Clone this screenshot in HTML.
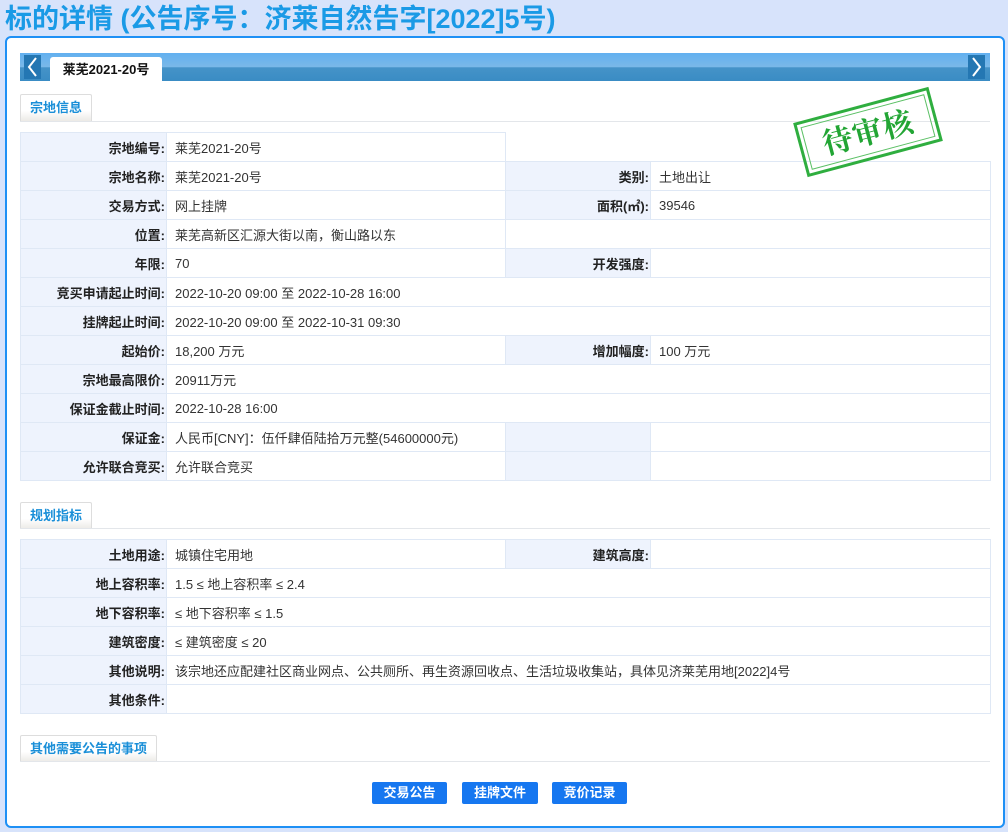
<!DOCTYPE html>
<html><head><meta charset="utf-8">
<style>
*{margin:0;padding:0;box-sizing:border-box}
body{width:1008px;height:832px;background:#d7e3fb;font-family:"Liberation Sans","Noto Sans CJK SC",sans-serif;position:relative;overflow:hidden;font-size:13px;color:#333}
.title{position:absolute;left:5px;top:2px;font-size:27px;font-weight:bold;color:#1a9ae6;line-height:34px;white-space:nowrap}
.panel{position:absolute;left:5px;top:36px;width:1000px;height:792px;background:#fff;border:2px solid #1e90f5;border-radius:6px}
.bar{position:absolute;left:20px;top:53px;width:970px;height:28px;background:linear-gradient(#62b0f0 0,#7ab8e8 50%,#4593c8 52%,#3a8cc4 100%)}
.arr{position:absolute;top:55px;width:17px;height:24px;background:#2477b3;color:#fff}
.tab{position:absolute;left:50px;top:57px;width:112px;height:24px;background:#fff;border-radius:3px 3px 0 0;font-weight:bold;font-size:13px;color:#111;text-align:center;line-height:26px}
.sec{position:absolute;left:20px;height:27px;border:1px solid #ddd;border-bottom:none;background:linear-gradient(#fff 60%,#eceae6);color:#1a8fd8;font-weight:bold;font-size:13px;line-height:26px;padding:0 9px;border-radius:2px 2px 0 0}
.secline{position:absolute;left:20px;width:970px;height:1px;background:#e3e6ea}
table{position:absolute;left:20px;width:970px;border-collapse:collapse;table-layout:fixed}
td{height:29px;border:1px solid #dfe8f5;padding:0 6px 0 8px;white-space:nowrap;font-size:13px;color:#333}
td.l{background:#eef3fd;text-align:right;font-weight:bold;color:#222;padding:0 1px 0 0}
td.n{border:none;background:#fff}
.btn{position:absolute;top:782px;height:22px;background:#1677f0;color:#fff;font-weight:bold;font-size:13px;line-height:22px;text-align:center;border-radius:2px}
.stamp{position:absolute;left:798px;top:104px;width:140px;height:56px;border:3px solid #2fae3f;transform:rotate(-15deg);color:#22a534;font-family:"Noto Serif CJK SC",serif;font-weight:bold;font-size:30px;text-align:center;line-height:46px;letter-spacing:1px}
.stamp:before{content:"";position:absolute;left:3px;top:3px;right:3px;bottom:3px;border:1px solid #5bc065}
</style></head><body>
<div class="title">标的详情 (公告序号：济莱自然告字[2022]5号)</div>
<div class="panel"></div>
<div class="bar"></div>
<div class="arr" style="left:24px"><svg width="17" height="24"><path d="M12 3 L5 12 L12 21" stroke="#fff" stroke-width="2" fill="none"/></svg></div>
<div class="arr" style="left:968px"><svg width="17" height="24"><path d="M5 3 L12 12 L5 21" stroke="#fff" stroke-width="2" fill="none"/></svg></div>
<div class="tab">莱芜2021-20号</div>

<div class="sec" style="top:94px">宗地信息</div>
<div class="secline" style="top:121px"></div>
<table style="top:132px">
<colgroup><col style="width:146px"><col style="width:339px"><col style="width:145px"><col style="width:340px"></colgroup>
<tr><td class="l">宗地编号:</td><td>莱芜2021-20号</td><td class="n" colspan="2"></td></tr>
<tr><td class="l">宗地名称:</td><td>莱芜2021-20号</td><td class="l">类别:</td><td>土地出让</td></tr>
<tr><td class="l">交易方式:</td><td>网上挂牌</td><td class="l">面积(㎡):</td><td>39546</td></tr>
<tr><td class="l">位置:</td><td>莱芜高新区汇源大街以南，衡山路以东</td><td colspan="2"></td></tr>
<tr><td class="l">年限:</td><td>70</td><td class="l">开发强度:</td><td></td></tr>
<tr><td class="l">竞买申请起止时间:</td><td colspan="3">2022-10-20 09:00 至 2022-10-28 16:00</td></tr>
<tr><td class="l">挂牌起止时间:</td><td colspan="3">2022-10-20 09:00 至 2022-10-31 09:30</td></tr>
<tr><td class="l">起始价:</td><td>18,200 万元</td><td class="l">增加幅度:</td><td>100 万元</td></tr>
<tr><td class="l">宗地最高限价:</td><td colspan="3">20911万元</td></tr>
<tr><td class="l">保证金截止时间:</td><td colspan="3">2022-10-28 16:00</td></tr>
<tr><td class="l">保证金:</td><td>人民币[CNY]：伍仟肆佰陆拾万元整(54600000元)</td><td class="l"></td><td></td></tr>
<tr><td class="l">允许联合竞买:</td><td>允许联合竞买</td><td class="l"></td><td></td></tr>
</table>

<div class="stamp">待审核</div>

<div class="sec" style="top:502px">规划指标</div>
<div class="secline" style="top:528px"></div>
<table style="top:539px">
<colgroup><col style="width:146px"><col style="width:339px"><col style="width:145px"><col style="width:340px"></colgroup>
<tr><td class="l">土地用途:</td><td>城镇住宅用地</td><td class="l">建筑高度:</td><td></td></tr>
<tr><td class="l">地上容积率:</td><td colspan="3">1.5 ≤ 地上容积率 ≤ 2.4</td></tr>
<tr><td class="l">地下容积率:</td><td colspan="3">≤ 地下容积率 ≤ 1.5</td></tr>
<tr><td class="l">建筑密度:</td><td colspan="3">≤ 建筑密度 ≤ 20</td></tr>
<tr><td class="l">其他说明:</td><td colspan="3">该宗地还应配建社区商业网点、公共厕所、再生资源回收点、生活垃圾收集站，具体见济莱芜用地[2022]4号</td></tr>
<tr><td class="l">其他条件:</td><td colspan="3"></td></tr>
</table>

<div class="sec" style="top:735px">其他需要公告的事项</div>
<div class="secline" style="top:761px"></div>

<div class="btn" style="left:372px;width:75px">交易公告</div>
<div class="btn" style="left:462px;width:76px">挂牌文件</div>
<div class="btn" style="left:552px;width:75px">竞价记录</div>
</body></html>
